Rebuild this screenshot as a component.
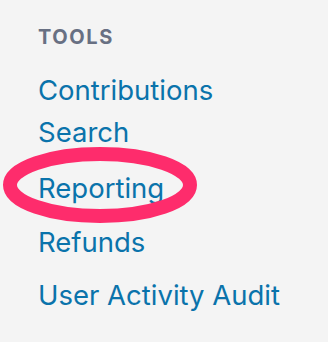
const links = ["Contributions", "Search", "Reporting", "Refunds", "User Activity Audit"];
const gaps = ["mt-[30px]", "mt-[15px]", "mt-[29px]", "mt-[27px]", "mt-[26px]"];

export default function App() {
  return (
    <div className="relative h-[342px] w-[328px] overflow-hidden bg-[#f4f4f4] pl-[38px] pt-[27px] font-['Inter',sans-serif]">
      <h3 className="text-[20px] font-bold leading-[20px] tracking-[0.08em] text-[#687083]">TOOLS</h3>
      <ul>
        {links.map((label, i) => (
          <li key={label} className={gaps[i]}>
            <a href="#" className="block text-[27.5px] leading-[27px] text-[#0a73ab]">
              {label}
            </a>
          </li>
        ))}
      </ul>
      <svg className="pointer-events-none absolute left-0 top-0" width="328" height="342">
        <ellipse cx="100" cy="185" rx="90" ry="31" fill="none" stroke="#fe2c6c" strokeWidth="14" />
      </svg>
    </div>
  );
}
